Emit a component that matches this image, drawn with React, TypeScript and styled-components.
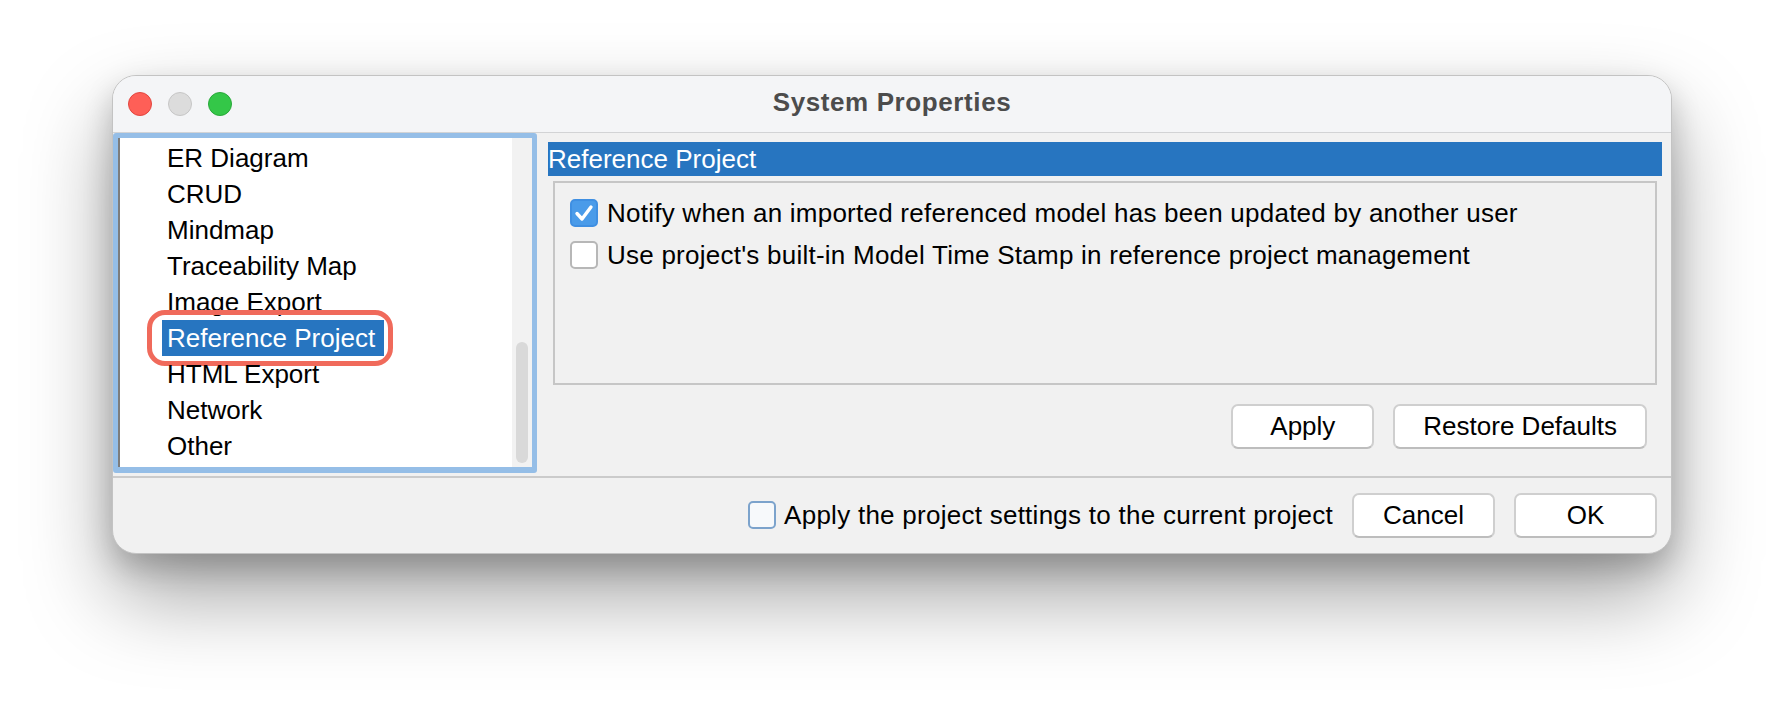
import React from "react";
import styled, { createGlobalStyle } from "styled-components";

const GlobalStyle = createGlobalStyle`
  html, body {
    margin: 0;
    padding: 0;
    background: #ffffff;
  }
  body {
    font-family: "Liberation Sans", Arial, Helvetica, sans-serif;
    color: #000;
  }
  * { box-sizing: border-box; }
`;

const Page = styled.div`
  width: 1784px;
  height: 702px;
  overflow: hidden;
  padding: 75px 0 0 112px;
`;

const Window = styled.div`
  width: 1560px;
  height: 479px;
  display: flex;
  flex-direction: column;
  background: #f1f1f1;
  border: 1px solid #c3c3c3;
  border-radius: 24px;
  overflow: hidden;
  box-shadow: 0 42px 85px rgba(0, 0, 0, 0.36), 0 14px 30px rgba(0, 0, 0, 0.2);
`;

const TitleBar = styled.div`
  height: 57px;
  flex: none;
  display: grid;
  grid-template-columns: 1fr auto 1fr;
  align-items: center;
  background: #f4f5f7;
  border-bottom: 1px solid #d2d3d5;
`;

const Lights = styled.div`
  display: flex;
  gap: 16px;
  padding-left: 15px;
`;

const Light = styled.span<{ $fill: string; $edge: string }>`
  width: 24px;
  height: 24px;
  border-radius: 50%;
  background: ${(p) => p.$fill};
  border: 1px solid ${(p) => p.$edge};
`;

const Title = styled.div`
  font-size: 26px;
  font-weight: bold;
  letter-spacing: 0.6px;
  color: #4c4c4c;
  padding-bottom: 3px;
`;

const Body = styled.div`
  height: 343px;
  flex: none;
  display: flex;
  align-items: flex-start;
`;

const ListFrame = styled.div`
  width: 424px;
  height: 340px;
  flex: none;
  display: flex;
  border: 5px solid #95bee7;
  border-bottom-width: 6px;
  border-radius: 3px;
  box-shadow: inset 0 0 0 1px #7faad6;
`;

const ListArea = styled.ul`
  flex: 1;
  margin: 0;
  padding: 2px 0 0 0;
  list-style: none;
  background: #ffffff;
  border-left: 2px solid #7d7d7d;
`;

const Item = styled.li<{ $selected?: boolean }>`
  position: relative;
  width: fit-content;
  height: 36px;
  line-height: 36px;
  margin-left: 42px;
  padding: 0 9px 0 5px;
  font-size: 26px;
  white-space: nowrap;
  background: ${(p) => (p.$selected ? "#2775c0" : "transparent")};
  color: ${(p) => (p.$selected ? "#ffffff" : "#000000")};

  ${(p) =>
    p.$selected &&
    `
    &::after {
      content: "";
      position: absolute;
      inset: -10px -9px -10px -15px;
      border: 5px solid #f06a5b;
      border-radius: 18px;
      pointer-events: none;
    }
  `}
`;

const Track = styled.div`
  width: 20px;
  flex: none;
  display: flex;
  flex-direction: column;
  justify-content: flex-end;
  align-items: center;
  padding-bottom: 4px;
  background: #f2f2f2;
`;

const Thumb = styled.div`
  width: 12px;
  height: 121px;
  border-radius: 6px;
  background: #d9d9d9;
`;

const RightPane = styled.div`
  flex: 1;
  display: flex;
  flex-direction: column;
  margin: 9px 9px 0 11px;
`;

const SectionHeader = styled.div`
  height: 34px;
  line-height: 34px;
  background: #2775c0;
  color: #ffffff;
  font-size: 26px;
  white-space: nowrap;
`;

const OptionsBox = styled.div`
  height: 204px;
  margin: 5px 5px 0 5px;
  border: 2px solid #c6c6c6;
  padding: 9px 15px;
  display: flex;
  flex-direction: column;
`;

const CheckRow = styled.label`
  height: 42px;
  display: flex;
  align-items: center;
  gap: 9px;
  font-size: 26px;
  letter-spacing: 0.24px;
  white-space: nowrap;
`;

const Box = styled.span<{ $checked?: boolean; $tone?: "blue" }>`
  width: 28px;
  height: 28px;
  flex: none;
  display: flex;
  align-items: center;
  justify-content: center;
  border-radius: 5px;
  border: 2px solid
    ${(p) => (p.$checked ? "#3f8fe2" : p.$tone === "blue" ? "#7ca3cc" : "#b7b7b7")};
  background: ${(p) => (p.$checked ? "#4a9be9" : p.$tone === "blue" ? "#f7f9fb" : "#ffffff")};
`;

const ButtonRow = styled.div`
  display: flex;
  justify-content: flex-end;
  gap: 19px;
  margin-top: 19px;
  padding-right: 15px;
`;

const Button = styled.button`
  min-width: 143px;
  height: 45px;
  padding: 0 28px;
  font-family: inherit;
  font-size: 26px;
  color: #000;
  background: #ffffff;
  border: 2px solid #cfcfcf;
  border-bottom-color: #bdbdbd;
  border-radius: 7px;
`;

const Footer = styled.div`
  flex: 1;
  display: flex;
  align-items: center;
  justify-content: flex-end;
  border-top: 2px solid #cbcbcb;
  padding: 0 14px 1px 0;
`;

const FooterCheck = styled.label`
  display: flex;
  align-items: center;
  gap: 8px;
  font-size: 26px;
  letter-spacing: 0.26px;
  white-space: nowrap;
  margin-right: 19px;
`;

const FooterButtons = styled.div`
  display: flex;
  gap: 19px;
`;

const Check = () => (
  <svg width="20" height="18" viewBox="0 0 20 18" aria-hidden="true">
    <path
      d="M3 9.5 L8 15 L17 3"
      fill="none"
      stroke="#ffffff"
      strokeWidth="3.4"
      strokeLinecap="round"
      strokeLinejoin="round"
    />
  </svg>
);

const categories = [
  "ER Diagram",
  "CRUD",
  "Mindmap",
  "Traceability Map",
  "Image Export",
  "Reference Project",
  "HTML Export",
  "Network",
  "Other",
];

export default function App() {
  return (
    <>
      <GlobalStyle />
      <Page>
        <Window>
          <TitleBar>
            <Lights>
              <Light $fill="#fe5f57" $edge="#e2463f" />
              <Light $fill="#dcdcdc" $edge="#c6c6c6" />
              <Light $fill="#34c748" $edge="#29a83a" />
            </Lights>
            <Title>System Properties</Title>
            <span />
          </TitleBar>

          <Body>
            <ListFrame>
              <ListArea>
                {categories.map((c) => (
                  <Item key={c} $selected={c === "Reference Project"}>
                    {c}
                  </Item>
                ))}
              </ListArea>
              <Track>
                <Thumb />
              </Track>
            </ListFrame>

            <RightPane>
              <SectionHeader>Reference Project</SectionHeader>
              <OptionsBox>
                <CheckRow>
                  <Box $checked>
                    <Check />
                  </Box>
                  Notify when an imported referenced model has been updated by another user
                </CheckRow>
                <CheckRow>
                  <Box />
                  Use project's built-in Model Time Stamp in reference project management
                </CheckRow>
              </OptionsBox>
              <ButtonRow>
                <Button>Apply</Button>
                <Button>Restore Defaults</Button>
              </ButtonRow>
            </RightPane>
          </Body>

          <Footer>
            <FooterCheck>
              <Box $tone="blue" />
              Apply the project settings to the current project
            </FooterCheck>
            <FooterButtons>
              <Button>Cancel</Button>
              <Button>OK</Button>
            </FooterButtons>
          </Footer>
        </Window>
      </Page>
    </>
  );
}
